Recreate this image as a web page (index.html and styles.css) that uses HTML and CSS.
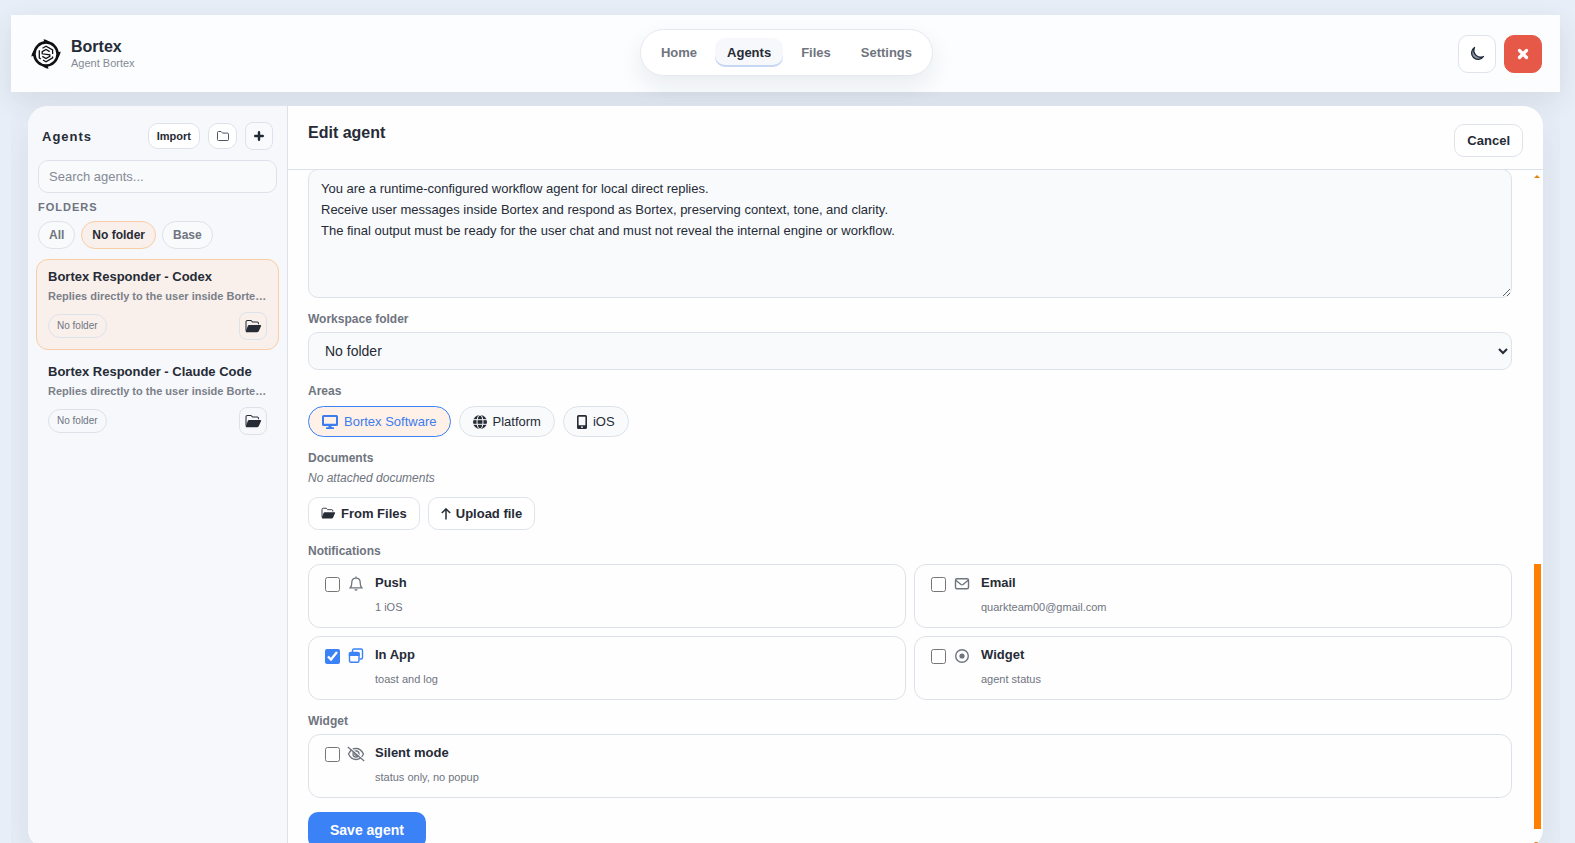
FILE: index.html
```
<!DOCTYPE html>
<html lang="en">
<head>
    <meta charset="UTF-8">
    <meta name="viewport" content="width=device-width, initial-scale=1.0">
    <title>Bortex - Edit agent</title>
    <link rel="stylesheet" href="styles.css">
</head>
<body>
    <!-- Shared icons -->
    <svg class="sprite" aria-hidden="true">
        <symbol id="icon-folder-open" viewBox="0 0 18 16">
            <path d="M1 12.500V3q0-1.500 1.500-1.500h3.800L8 3.300h5q1.300 0 1.300 1.400V5.600" fill="none" stroke="currentColor" stroke-width="1.100"/>
            <path d="M4.200 6.500h12.300q1 0 .6 1l-2.400 5.400q-.5 1.200-1.700 1.200H1.600q-1.200 0-.7-1.200l2-5.500q.3-.9 1.300-.9z" fill="currentColor"/>
        </symbol>
    </svg>

    <div class="app">
        <header class="topbar">
            <div class="brand">
                <svg class="brand-logo" viewBox="0 0 30 30" fill="none" stroke="#111">
                    <circle cx="15" cy="15" r="11.600" stroke-width="2.600"/>
                    <path d="M12.500.3q5 .7 7.500 4.200l-6.500-.8zM29.700 12.500q-.7 5-4.200 7.500l.8-6.500zM17.500 29.700q-5-.7-7.500-4.200l6.500.8zM.3 17.500q.7-5 4.200-7.500l-.8 6.500z" fill="#111" stroke="none"/>
                    <path d="M11.500 9.200L15 7.300l6.600 3.700v4M21.600 17.500v1.400L15 22.700l-3-1.700M9.800 20l-1.500-1.100V11.200" stroke-width="1.300"/>
                    <path d="M18.700 12.600L15 10.500l-3.800 2.200v2.100l7.600 1v1.500L15 19.500l-3.700-2.100" stroke-width="1.300"/>
                </svg>
                <div class="brand-text">
                    <strong>Bortex</strong>
                    <span>Agent Bortex</span>
                </div>
            </div>

            <nav class="tabs">
                <a href="#home">Home</a>
                <a href="#agents" class="active">Agents</a>
                <a href="#files">Files</a>
                <a href="#settings">Settings</a>
            </nav>

            <div class="topbar-actions">
                <button type="button" class="square-btn" aria-label="Dark mode">
                    <svg width="16" height="16" viewBox="0 0 16 16"><path d="M5.500 1.500A6.500 6.500 0 1 0 14.500 10.500 6.800 6.800 0 0 1 5.500 1.500z" fill="#8b93a1"/><path d="M5.500 1.500A6.500 6.500 0 1 0 14.500 10.500 6.800 6.800 0 0 1 5.500 1.500z" fill="none" stroke="#1f2937" stroke-width="1.300" stroke-linejoin="round"/></svg>
                </button>
                <button type="button" class="square-btn danger" aria-label="Close">
                    <svg width="12" height="12" viewBox="0 0 12 12"><path d="M2.500 2.500l7 7M9.500 2.500l-7 7" stroke="#fff" stroke-width="3.200" stroke-linecap="round"/></svg>
                </button>
            </div>
        </header>

        <div class="workspace">
            <div class="shell">
                <aside class="sidebar">
                    <div class="sidebar-head">
                        <h2>Agents</h2>
                        <button type="button" class="import-btn">Import</button>
                        <button type="button" class="folder-btn" aria-label="New folder">
                            <svg width="12" height="12" viewBox="0 0 12 12" fill="none" stroke="#4b5563"><path d="M.5 9.500v-7q0-1 1-1h2.600l1.500 1.600h4.900q1 0 1 1v5.400q0 1-1 1h-9q-1 0-1-1z"/></svg>
                        </button>
                        <button type="button" class="add-btn" aria-label="New agent">
                            <svg width="10" height="10" viewBox="0 0 10 10"><path d="M5 1.200v7.600M1.200 5h7.600" stroke="#1f2937" stroke-width="2.400" stroke-linecap="round"/></svg>
                        </button>
                    </div>
                    <input type="search" class="search" placeholder="Search agents..." aria-label="Search agents">
                    <h3 class="folders-title">Folders</h3>
                    <div class="folder-filters">
                        <button type="button" class="filter">All</button>
                        <button type="button" class="filter active">No folder</button>
                        <button type="button" class="filter">Base</button>
                    </div>
                    <div class="agent-list">
                        <article class="agent active">
                            <h4>Bortex Responder - Codex</h4>
                            <p>Replies directly to the user inside Borte…</p>
                            <div class="agent-foot">
                                <span class="tag">No folder</span>
                                <button type="button" class="move-btn" aria-label="Move to folder"><svg width="17" height="15"><use href="#icon-folder-open"/></svg></button>
                            </div>
                        </article>
                        <article class="agent">
                            <h4>Bortex Responder - Claude Code</h4>
                            <p>Replies directly to the user inside Borte…</p>
                            <div class="agent-foot">
                                <span class="tag">No folder</span>
                                <button type="button" class="move-btn" aria-label="Move to folder"><svg width="17" height="15"><use href="#icon-folder-open"/></svg></button>
                            </div>
                        </article>
                    </div>
                </aside>

                <main class="editor">
                    <div class="editor-head">
                        <h1>Edit agent</h1>
                        <button type="button" class="btn">Cancel</button>
                    </div>

                    <div class="editor-body">
                        <form class="agent-form">
                            <textarea class="prompt" aria-label="Instructions">You are a runtime-configured workflow agent for local direct replies.
Receive user messages inside Bortex and respond as Bortex, preserving context, tone, and clarity.
The final output must be ready for the user chat and must not reveal the internal engine or workflow.</textarea>

                            <label class="field-label" for="folder">Workspace folder</label>
                            <select id="folder" class="folder-select">
                                <option>No folder</option>
                                <option>Base</option>
                            </select>

                            <div class="field-label">Areas</div>
                            <div class="areas">
                                <button type="button" class="area active">
                                    <svg width="16" height="14" viewBox="0 0 16 14"><path d="M1.500 0h13Q16 0 16 1.500v8q0 1.500-1.500 1.500H9.500v1.200H12V14H4v-1.800h2.500V11h-5Q0 11 0 9.500v-8Q0 0 1.500 0zM2 2v6.800h12V2z" fill="currentColor" fill-rule="evenodd"/></svg>
                                    Bortex Software
                                </button>
                                <button type="button" class="area">
                                    <svg width="14" height="14" viewBox="0 0 14 14"><circle cx="7" cy="7" r="7" fill="currentColor"/><path d="M0 4.700h14M0 9.300h14" stroke="#f8fafc"/><ellipse cx="7" cy="7" rx="3" ry="7" fill="none" stroke="#f8fafc"/></svg>
                                    Platform
                                </button>
                                <button type="button" class="area">
                                    <svg width="10" height="14" viewBox="0 0 10 14"><path d="M1.500 0h7Q10 0 10 1.500v11Q10 14 8.500 14h-7Q0 14 0 12.500v-11Q0 0 1.500 0zM1.600 1.800v8.400h6.800V1.800zM4 11.500v1.200h2v-1.200z" fill="currentColor" fill-rule="evenodd"/></svg>
                                    iOS
                                </button>
                            </div>

                            <div class="field-label">Documents</div>
                            <p class="empty">No attached documents</p>
                            <div class="doc-actions">
                                <button type="button" class="btn"><svg width="15" height="13"><use href="#icon-folder-open"/></svg>From Files</button>
                                <button type="button" class="btn"><svg width="10" height="12" viewBox="0 0 10 12"><path d="M5 11.500V1M.8 5L5 .9 9.200 5" fill="none" stroke="currentColor" stroke-width="1.500"/></svg>Upload file</button>
                            </div>

                            <div class="field-label">Notifications</div>
                            <div class="options">
                                <label class="option">
                                    <input type="checkbox">
                                    <svg viewBox="0 0 18 16" fill="none" stroke="currentColor" stroke-width="1.300"><path d="M3.300 11.800h11.400q-1.500-1.500-1.500-5.300Q13.200 2.200 9 2.200T4.800 6.500q0 3.800-1.500 5.300zM9 2.200V.6"/><path d="M7.300 13.200h3.400q-.4 1.500-1.700 1.500t-1.700-1.500z" fill="currentColor" stroke="none"/></svg>
                                    <span class="option-text"><strong>Push</strong><small>1 iOS</small></span>
                                </label>
                                <label class="option">
                                    <input type="checkbox">
                                    <svg viewBox="0 0 18 16" fill="none" stroke="currentColor" stroke-width="1.400"><rect x="2.500" y="2.700" width="13" height="10" rx="1.500"/><path d="M2.800 4.300L8 8.500q1 .7 2 0l5.200-4.200"/></svg>
                                    <span class="option-text"><strong>Email</strong><small>quarkteam00@gmail.com</small></span>
                                </label>
                                <label class="option">
                                    <input type="checkbox" checked>
                                    <svg viewBox="0 0 18 16" fill="none" stroke="currentColor" stroke-width="1.400"><rect x="2.500" y="4.500" width="9.500" height="9.800" rx="1.500"/><path d="M2.500 5.200h9.500v2H2.500z" fill="currentColor"/><path d="M5.500 4V2.500Q5.500 1 7 1h7q1.500 0 1.500 1.500v7q0 1.500-1.500 1.500h-1.500"/></svg>
                                    <span class="option-text"><strong>In App</strong><small>toast and log</small></span>
                                </label>
                                <label class="option">
                                    <input type="checkbox">
                                    <svg viewBox="0 0 18 16" fill="none" stroke="currentColor" stroke-width="1.400"><circle cx="9" cy="8" r="6.300"/><circle cx="9" cy="8" r="2.600" fill="currentColor" stroke="none"/></svg>
                                    <span class="option-text"><strong>Widget</strong><small>agent status</small></span>
                                </label>
                            </div>

                            <div class="field-label">Widget</div>
                            <div class="options single">
                                <label class="option">
                                    <input type="checkbox">
                                    <svg viewBox="0 0 18 16" fill="none" stroke="currentColor" stroke-width="1.300"><path d="M1.500 8Q4.200 2.500 9 2.500T16.500 8Q13.800 13.500 9 13.500T1.500 8z"/><circle cx="9" cy="8" r="3"/><path d="M8.500 6.500A1.500 1.500 0 1 0 10.500 8.500"/><path d="M1.800.4l16 14" stroke="#fff" stroke-width="1.300"/><path d="M.8 1l16.400 14"/></svg>
                                    <span class="option-text"><strong>Silent mode</strong><small>status only, no popup</small></span>
                                </label>
                            </div>

                            <button type="submit" class="save-btn">Save agent</button>
                        </form>

                        <div class="scrollbar" aria-hidden="true">
                            <span class="arrow-up"></span>
                            <span class="thumb"></span>
                            <span class="arrow-down"></span>
                        </div>
                    </div>
                </main>
            </div>
        </div>
    </div>
</body>
</html>
```

FILE: styles.css
```
* {
    margin: 0;
    padding: 0;
    box-sizing: border-box;
}

body {
    height: 100vh;
    overflow: hidden;
    background: #e8eef7;
    color: #262b36;
    font-family: "Liberation Sans", Arial, sans-serif;
    font-size: 13px;
}

button,
input,
select,
textarea {
    font: inherit;
    color: inherit;
}

button {
    cursor: pointer;
}

.sprite {
    position: absolute;
    width: 0;
    height: 0;
}

.app {
    height: 100vh;
    padding: 15px 15px 0 11px;
    display: flex;
    flex-direction: column;
}

/* Top bar */
.topbar {
    display: grid;
    grid-template-columns: 1fr auto 1fr;
    align-items: center;
    height: 77px;
    flex-shrink: 0;
    padding: 0 18px 0 20px;
    background: #fbfdfe;
    box-shadow: 0 8px 24px rgba(40, 50, 60, 0.1);
}

.brand {
    display: flex;
    align-items: center;
    gap: 10px;
}

.brand-logo {
    width: 30px;
    height: 30px;
}

.brand-text {
    display: flex;
    flex-direction: column;
}

.brand-text strong {
    font-size: 16px;
    line-height: 18px;
}

.brand-text span {
    color: #858a94;
    font-size: 11px;
    line-height: 14px;
}

.tabs {
    display: flex;
    align-items: center;
    gap: 6px;
    height: 47px;
    margin-bottom: 2px;
    padding: 0 8px;
    background: #fff;
    border: 1px solid #e6eaf0;
    border-radius: 24px;
    box-shadow: 0 10px 24px rgba(30, 41, 59, 0.08);
}

.tabs a {
    padding: 6px 12px;
    border-radius: 10px;
    color: #6f747e;
    font-weight: bold;
    line-height: 17px;
    text-decoration: none;
}

.tabs .active {
    background: #f6f8fb;
    color: #262b36;
    box-shadow: inset 0 -2px 0 #c8d7f5;
}

.topbar-actions {
    display: flex;
    justify-content: flex-end;
    gap: 8px;
}

.square-btn {
    display: grid;
    place-items: center;
    width: 38px;
    height: 38px;
    background: #fff;
    border: 1px solid #dfe3ea;
    border-radius: 10px;
}

.square-btn.danger {
    background: #e65949;
    border-color: #e65949;
}

/* Shell */
.workspace {
    flex: 1;
    min-height: 0;
    padding: 14px 17px 0;
    overflow: clip;
}

.shell {
    display: flex;
    height: calc(100% + 6px);
    background: #fefefe;
    border-radius: 20px;
    overflow: hidden;
    box-shadow: 0 16px 40px rgba(40, 50, 60, 0.09);
}

.sidebar {
    width: 260px;
    flex-shrink: 0;
    padding: 16px 8px;
    background: #f6f8fc;
    border-right: 1px solid #dde2ea;
}

.sidebar-head {
    display: flex;
    align-items: center;
    gap: 8px;
    padding: 0 6px;
}

.sidebar-head h2 {
    margin-right: auto;
    font-size: 13px;
    letter-spacing: 1px;
}

.sidebar-head button {
    background: #fff;
    border: 1px solid #dde2ea;
}

.sidebar-head .import-btn {
    height: 26px;
    padding: 0 8px;
    border-radius: 10px;
    font-size: 11px;
    font-weight: bold;
}

.sidebar-head .folder-btn {
    display: grid;
    place-items: center;
    width: 29px;
    height: 26px;
    border-radius: 10px;
}

.sidebar-head .add-btn {
    display: grid;
    place-items: center;
    width: 28px;
    height: 28px;
    background: #f8fafc;
    border-radius: 8px;
}

.search {
    display: block;
    width: calc(100% - 4px);
    height: 33px;
    margin: 10px 2px 0;
    padding: 0 10px;
    background: #f8fafc;
    border: 1px solid #dde2ea;
    border-radius: 10px;
}

.search::placeholder {
    color: #858a94;
}

.folders-title {
    margin: 7px 2px;
    color: #6f747e;
    font-size: 11px;
    line-height: 14px;
    letter-spacing: 1px;
    text-transform: uppercase;
}

.folder-filters {
    display: flex;
    gap: 6px;
    padding: 0 2px;
}

.filter {
    height: 28px;
    padding: 0 10px;
    background: #f8fafc;
    border: 1px solid #dde2ea;
    border-radius: 14px;
    color: #6f747e;
    font-size: 12px;
    font-weight: bold;
}

.filter.active {
    background: #faf0eb;
    border-color: #f9cda5;
    color: #262b36;
}

.agent-list {
    display: flex;
    flex-direction: column;
    gap: 4px;
    margin-top: 10px;
}

.agent {
    padding: 8px 11px 9px;
    border: 1px solid transparent;
    border-radius: 12px;
}

.agent.active {
    background: #f9f0ec;
    border-color: #f9cda5;
}

.agent h4 {
    font-size: 13px;
    line-height: 18px;
}

.agent p {
    margin-top: 2px;
    color: #7b7f88;
    font-size: 11px;
    font-weight: bold;
    line-height: 16px;
    white-space: nowrap;
}

.agent-foot {
    display: flex;
    align-items: center;
    justify-content: space-between;
    margin-top: 8px;
}

.tag {
    padding: 0 8px;
    border: 1px solid #dde2ea;
    border-radius: 12px;
    color: #6f747e;
    font-size: 10px;
    line-height: 22px;
}

.move-btn {
    display: grid;
    place-items: center;
    width: 28px;
    height: 28px;
    background: transparent;
    border: 1px solid #dde2ea;
    border-radius: 8px;
}

/* Editor */
.editor {
    flex: 1;
    min-width: 0;
    display: flex;
    flex-direction: column;
}

.editor-head {
    display: flex;
    justify-content: space-between;
    align-items: flex-start;
    height: 64px;
    flex-shrink: 0;
    padding: 18px 20px 0;
    border-bottom: 1px solid #dde2ea;
}

.editor-head h1 {
    font-size: 16px;
    line-height: 18px;
}

.btn {
    display: flex;
    align-items: center;
    gap: 5px;
    height: 33px;
    padding: 0 12px;
    background: #fff;
    border: 1px solid #dfe3ea;
    border-radius: 10px;
    font-weight: bold;
}

.editor-body {
    flex: 1;
    min-height: 0;
    display: flex;
    overflow: hidden;
}

.agent-form {
    flex: 1;
    min-width: 0;
    padding: 0 21px 0 20px;
}

.prompt {
    display: block;
    width: 100%;
    height: 129px;
    margin-top: -1px;
    padding: 8px 12px;
    background: #f8fafc;
    border: 1px solid #dde2ea;
    border-radius: 10px;
    line-height: 21px;
    resize: vertical;
}

.field-label {
    display: block;
    margin: 13px 0 5px;
    color: #6f747e;
    font-size: 12px;
    font-weight: bold;
    line-height: 16px;
}

.folder-select {
    display: block;
    width: 100%;
    height: 38px;
    padding: 0 12px;
    background: #f8fafc;
    border: 1px solid #dde2ea;
    border-radius: 10px;
    font-size: 14px;
}

.areas,
.doc-actions {
    display: flex;
    gap: 8px;
}

.areas {
    padding-top: 2px;
}

.area {
    display: flex;
    align-items: center;
    gap: 6px;
    height: 31px;
    padding: 0 13px;
    background: #f8fafc;
    border: 1px solid #dde2ea;
    border-radius: 16px;
}

.area.active {
    background: #fff0e8;
    border-color: #3b82f6;
    color: #3b7ded;
}

.empty {
    margin: -1px 0 11px;
    color: #6f747e;
    font-size: 12px;
    font-style: italic;
    line-height: 16px;
}

.options {
    display: grid;
    grid-template-columns: 1fr 1fr;
    gap: 8px;
}

.options.single {
    grid-template-columns: 1fr;
}

.option {
    display: flex;
    align-items: flex-start;
    height: 64px;
    padding: 9px 16px;
    background: #fefefe;
    border: 1px solid #dde2ea;
    border-radius: 12px;
}

.option input {
    width: 15px;
    height: 15px;
    margin-top: 3px;
    accent-color: #3b82f6;
}

.option svg {
    width: 18px;
    height: 16px;
    margin: 2px 10px 0 7px;
    color: #6f747e;
}

.option input:checked + svg {
    color: #3b82f6;
}

.option-text strong {
    display: block;
    line-height: 17px;
}

.option-text small {
    display: block;
    margin-top: 9px;
    color: #6f747e;
    font-size: 11px;
    line-height: 14px;
}

.save-btn {
    height: 36px;
    margin-top: 14px;
    padding: 0 22px;
    background: #3b82f6;
    border: 0;
    border-radius: 10px;
    color: #fff;
    font-size: 14px;
    font-weight: bold;
}

/* Orange scroll track */
.scrollbar {
    display: flex;
    flex-direction: column;
    align-items: center;
    width: 8px;
    margin-right: 2px;
    padding: 5px 0 4px;
}

.arrow-up,
.arrow-down {
    border: 3px solid transparent;
}

.arrow-up {
    border-top: 0;
    border-bottom-color: #e8820c;
}

.arrow-down {
    border-bottom: 0;
    border-top-color: #e8820c;
}

.thumb {
    flex-basis: 265px;
    width: 7px;
    margin: auto 0 13px;
    background: #ff7f00;
}
```
